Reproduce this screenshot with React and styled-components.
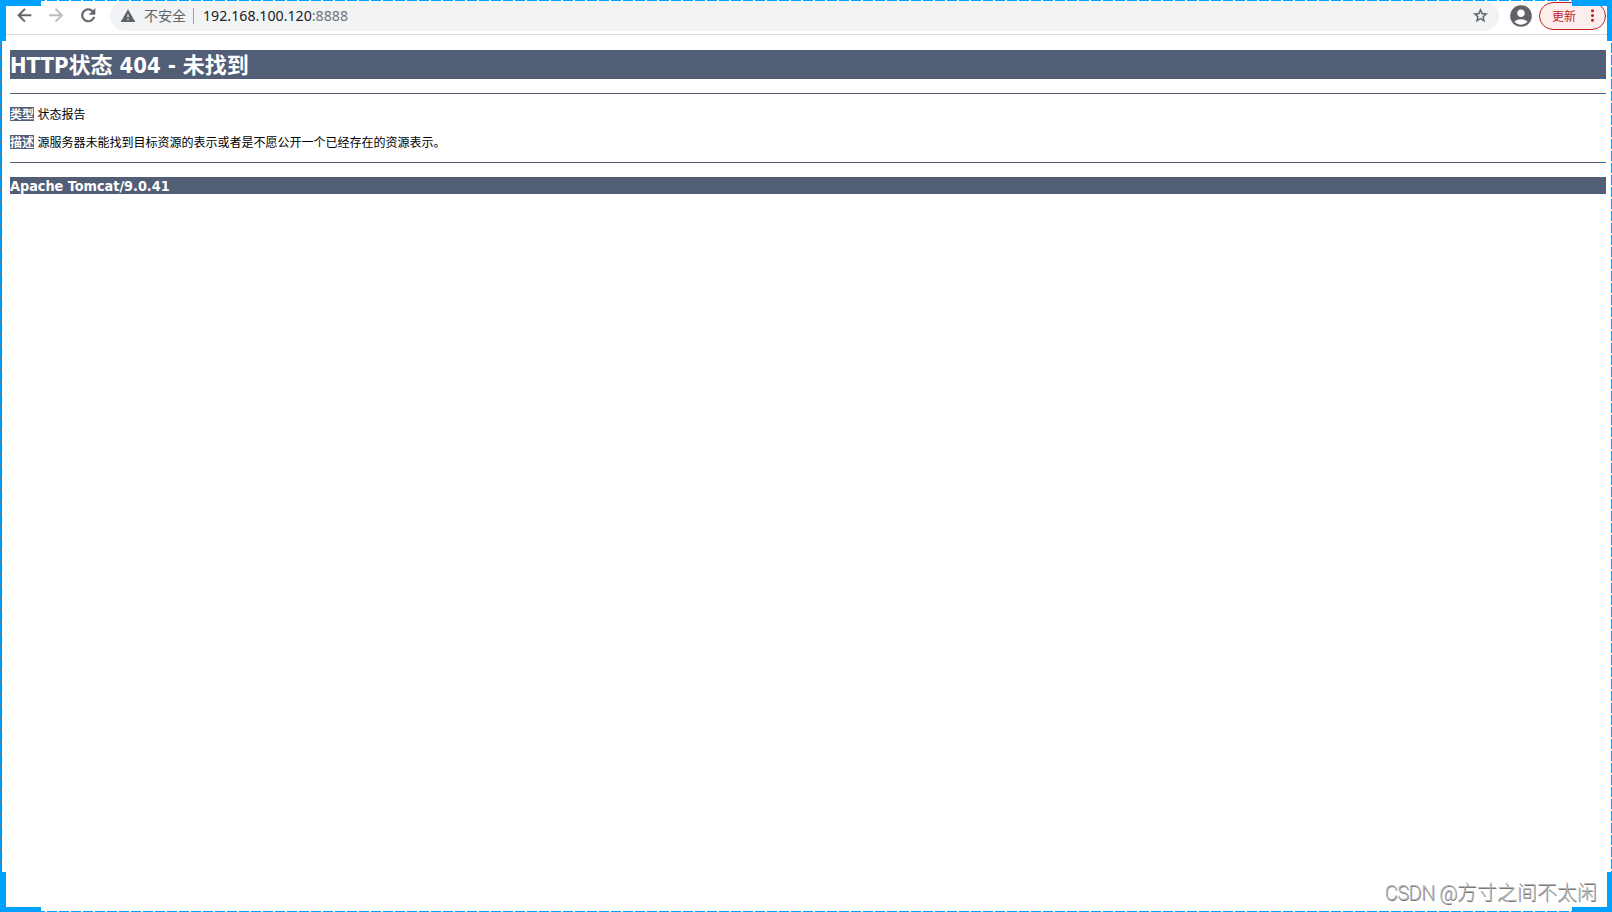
import styled, { createGlobalStyle } from "styled-components";
import {
  MdAccountCircle,
  MdArrowBack,
  MdArrowForward,
  MdMoreVert,
  MdRefresh,
  MdStarBorder,
  MdWarning,
} from "react-icons/md";

function Toolbar() {
  return (
    <Bar>
      <NavButton>
        <MdArrowBack />
      </NavButton>
      <NavButton $disabled>
        <MdArrowForward />
      </NavButton>
      <NavButton>
        <MdRefresh />
      </NavButton>
      <AddressBar>
        <WarningIcon />
        <Insecure>不安全</Insecure>
        <Divider />
        <Url>
          192.168.100.120<Port>:8888</Port>
        </Url>
        <StarIcon />
      </AddressBar>
      <Avatar />
      <UpdateButton>
        更新
        <MdMoreVert />
      </UpdateButton>
    </Bar>
  );
}

function ErrorPage() {
  return (
    <Page>
      <Heading>HTTP状态 404 - 未找到</Heading>
      <Line />
      <Text>
        <Label>类型</Label> 状态报告
      </Text>
      <Text>
        <Label>描述</Label>{" "}
        源服务器未能找到目标资源的表示或者是不愿公开一个已经存在的资源表示。
      </Text>
      <Line />
      <Version>Apache Tomcat/9.0.41</Version>
    </Page>
  );
}

function App() {
  return (
    <>
      <GlobalStyle />
      <Window>
        <Toolbar />
        <ErrorPage />
        <Watermark>
          <Site>CSDN @</Site>方寸之间不太闲
        </Watermark>
        <Edge $side="top" />
        <Edge $side="bottom" />
        <Edge $side="left" />
        <Edge $side="right" />
        <Corner $y="top" $x="left" />
        <Corner $y="top" $x="right" />
        <Corner $y="bottom" $x="left" />
        <Corner $y="bottom" $x="right" />
      </Window>
    </>
  );
}

export default App;

const GlobalStyle = createGlobalStyle`
  * {
    box-sizing: border-box;
  }

  body {
    margin: 0;
    background-color: #fff;
  }

  path[fill="none"] {
    stroke: none;
  }
`;

const Window = styled.div`
  position: relative;
  width: 1612px;
  height: 912px;
  overflow: hidden;
  font-family: "Noto Sans", "Noto Sans CJK SC", sans-serif;
`;

const Bar = styled.header`
  display: flex;
  align-items: center;
  height: 35px;
  padding: 0 6px 3px 14px;
  border-bottom: 1px solid #dadce0;
`;

const NavButton = styled.span`
  display: flex;
  justify-content: center;
  width: 20px;
  margin-right: 12px;
  font-size: 20.5px;
  color: ${(props) => (props.$disabled ? "#babcbe" : "#5f6368")};

  svg {
    flex-shrink: 0;
    stroke-width: 0.5;
  }
`;

const AddressBar = styled.div`
  display: flex;
  align-items: center;
  width: 1389px;
  height: 30px;
  padding: 0 10px;
  border-radius: 15px;
  background-color: #f1f3f4;
  font-size: 14px;
  color: #5f6368;
`;

const WarningIcon = styled(MdWarning)`
  font-size: 16px;
`;

const Insecure = styled.span`
  margin-left: 8px;
  padding-bottom: 1px;
`;

const Divider = styled.span`
  width: 1px;
  height: 16px;
  margin: 0 9px 0 7px;
  background-color: #9aa0a6;
`;

const Url = styled.span`
  flex: 1;
  font-size: 14.2px;
  color: #202124;
`;

const Port = styled.span`
  color: #70757a;
`;

const StarIcon = styled(MdStarBorder)`
  font-size: 17px;
  stroke-width: 0.5;
`;

const Avatar = styled(MdAccountCircle)`
  margin-left: 9px;
  font-size: 26px;
  color: #5f6368;
`;

const UpdateButton = styled.div`
  display: flex;
  align-items: center;
  justify-content: space-between;
  width: 67px;
  height: 28px;
  margin-left: 5px;
  padding: 0 3px 0 12px;
  border: 1px solid #c5221f;
  border-radius: 14px;
  background-color: #fceeed;
  font-size: 12px;
  color: #c5221f;

  svg {
    font-size: 19px;
  }
`;

const Page = styled.main`
  padding: 15px 6px 0 10px;
  font-family: "DejaVu Sans Condensed", "Noto Sans CJK SC", sans-serif;
  color: #000;
`;

const Heading = styled.h1`
  height: 29px;
  margin: 0 0 14px;
  background-color: #525d76;
  font-size: 22px;
  font-weight: 700;
  line-height: 31px;
  color: #fff;
`;

const Line = styled.hr`
  height: 1px;
  margin: 13px 0;
  border: none;
  background-color: #525d76;
`;

const Text = styled.p`
  height: 14px;
  margin: 0 0 14px;
  font-size: 12px;
  line-height: 16px;

  &:last-of-type {
    margin-bottom: 13px;
  }
`;

const Label = styled.b`
  display: inline-block;
  height: 14px;
  background-color: #525d76;
  color: #fff;
`;

const Version = styled.h3`
  height: 17px;
  margin: 14px 0 0;
  background-color: #525d76;
  font-size: 14.3px;
  line-height: 19px;
  color: #fff;
`;

const Watermark = styled.span`
  position: absolute;
  right: 15px;
  bottom: 4px;
  font-family: Roboto, "Noto Sans CJK SC", sans-serif;
  font-size: 20px;
  font-weight: 300;
  line-height: 30px;
  color: #b4b4b4;
  text-shadow: 0.5px 0.5px 0 #777;
`;

const Site = styled.span`
  letter-spacing: -0.5px;
`;

// Dashed selection frame around the window
const Edge = styled.div`
  position: absolute;
  ${(props) => props.$side}: 0;
  ${(props) =>
    props.$side === "top" || props.$side === "bottom"
      ? `
    left: 0;
    width: 100%;
    height: 1px;
    background: repeating-linear-gradient(to right, #00a0ff 0 9px, transparent 9px 11px, #00a0ff 11px 12px);
  `
      : `
    top: 0;
    width: 1px;
    height: 100%;
  `}
  ${(props) =>
    props.$side === "left" &&
    `
    width: 2px;
    border-right: 1px solid #5c6f80;
    background: repeating-linear-gradient(to bottom, #00a0ff 0 9px, #8c7c74 9px 11px, #00a0ff 11px 12px);
  `}
  ${(props) =>
    props.$side === "right" &&
    `
    background: repeating-linear-gradient(to bottom, #00a0ff 0 5px, transparent 5px 7px, #00a0ff 7px 12px);
  `}
`;

const Corner = styled.div`
  position: absolute;
  ${(props) => props.$y}: 0;
  ${(props) => props.$x}: 0;
  width: ${(props) => (props.$x === "left" ? "41px" : "40px")};
  height: ${(props) => (props.$y === "top" ? "41px" : "40px")};
  border: 0 solid #00a0ff;
  border-${(props) => props.$y}-width: ${(props) =>
    props.$y === "top" ? "6px" : "5px"};
  border-${(props) => props.$x}-width: ${(props) =>
    props.$x === "left" ? "6px" : "5px"};
`;
